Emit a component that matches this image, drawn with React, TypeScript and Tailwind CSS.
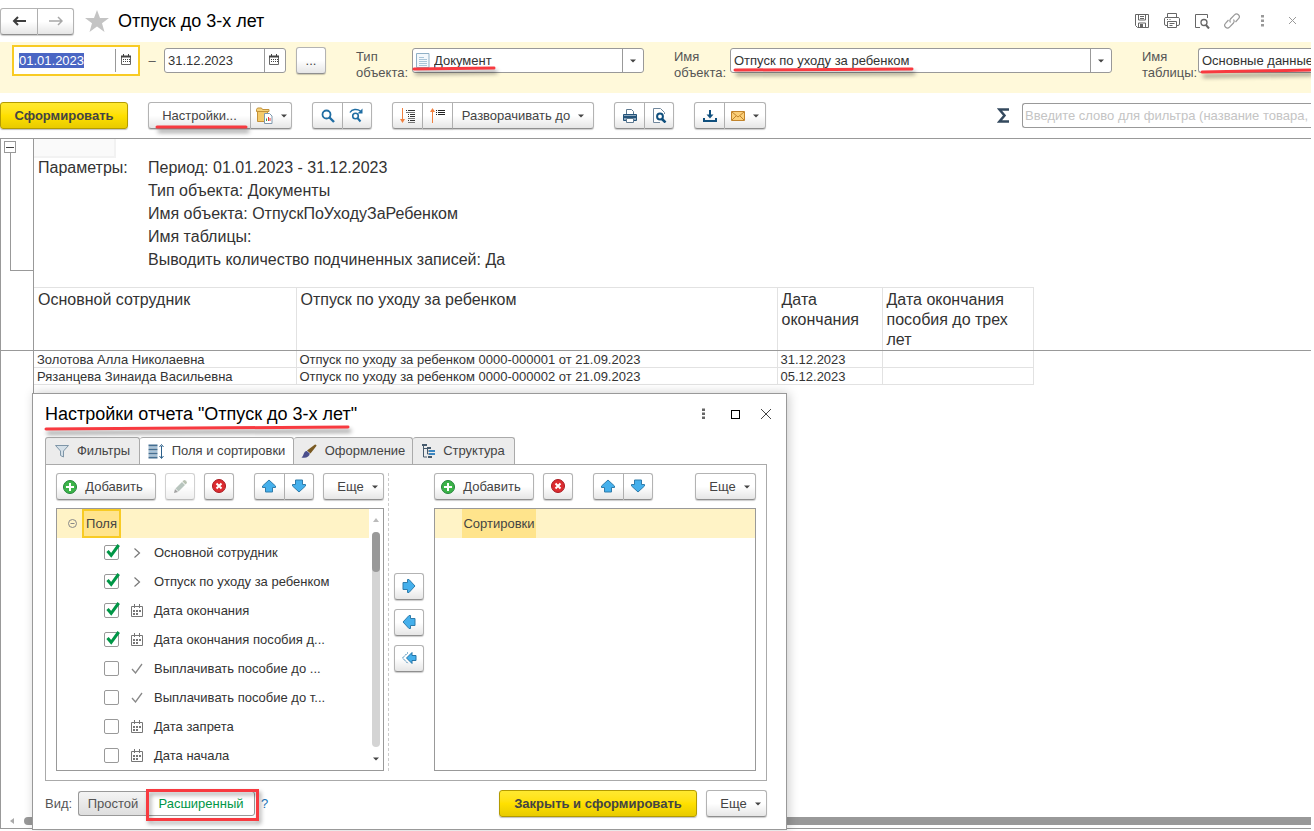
import { useEffect, useRef, useState } from "react";
import type { ReactNode } from "react";
import clsx from "clsx";

const BTN = "flex h-[27px] items-center justify-center border border-[#b3b3b3] border-b-[#8f8f8f] bg-linear-to-b from-white from-50% to-[#e6e6e6] text-[#444] shadow-[0_1px_1px_rgba(0,0,0,0.2)]";
const YELLOW = "flex h-[27px] items-center justify-center rounded-[3px] border border-[#b39b00] bg-linear-to-b from-[#ffe92f] via-[#ffe000] to-[#e8cb00] font-bold text-[#444] shadow-[0_1px_1px_rgba(0,0,0,0.25)]";

type BtnProps = { children: ReactNode; className?: string; label?: string; disabled?: boolean; pos?: "one" | "first" | "mid" | "last" };

function Btn({ children, className, label, disabled, pos = "one" }: BtnProps) {
  return (
    <button
      type="button"
      aria-label={label}
      disabled={disabled}
      className={clsx(
        BTN,
        pos === "one" && "rounded-[3px]",
        pos === "first" && "rounded-l-[3px]",
        pos === "mid" && "border-l-0",
        pos === "last" && "rounded-r-[3px] border-l-0",
        className
      )}
    >
      {children}
    </button>
  );
}

function Caret({ className }: { className?: string }) {
  return (
    <svg className={clsx("shrink-0", className)} width="6" height="4" viewBox="0 0 6 4">
      <path d="M0 0.5h6L3 3.5z" fill="#444" />
    </svg>
  );
}

// hand-drawn red underline with a soft shadow
function Mark({ w, y1, y2, className }: { w: number; y1: number; y2: number; className: string }) {
  return (
    <svg
      className={clsx("pointer-events-none absolute z-10 overflow-visible drop-shadow-[2px_4px_2px_rgba(0,0,0,0.45)]", className)}
      width={w}
      height="4"
    >
      <line x1="1" y1={y1} x2={w - 1} y2={y2} stroke="#f83a40" strokeWidth="3" strokeLinecap="round" />
    </svg>
  );
}

function CalendarSmall() {
  return (
    <svg width="10" height="11" viewBox="0 0 10 11" fill="none" stroke="#444">
      <path d="M0.5 2.5h9v8h-9z" stroke="#666" />
      <path d="M0 2.5h10" strokeWidth="2" />
      <path d="M2.5 0v2M7.5 0v2" />
      <path d="M2 5.5h7M2 7.5h7" strokeDasharray="1 1" />
    </svg>
  );
}

function CalendarField() {
  return (
    <svg width="12" height="13" viewBox="0 0 12 13" fill="none" stroke="#777">
      <path d="M0.5 2.5h11v10h-11z" />
      <path d="M3.5 0v4M8.5 0v4" />
      <path d="M2 7h8M2 10h5" strokeWidth="2" strokeDasharray="2 1" />
    </svg>
  );
}

function PlusIcon() {
  return (
    <svg width="14" height="14" viewBox="0 0 14 14">
      <circle cx="7" cy="7" r="6.5" fill="#3cb449" stroke="#23843a" />
      <path d="M7 3v8M3 7h8" stroke="#fff" strokeWidth="2" />
    </svg>
  );
}

function DeleteIcon() {
  return (
    <svg width="14" height="14" viewBox="0 0 14 14">
      <circle cx="7" cy="7" r="6.5" fill="#dc2c30" stroke="#a81c22" />
      <path d="M4.5 4.5l5 5M9.5 4.5l-5 5" stroke="#fff" strokeWidth="2" />
    </svg>
  );
}

function BlueArrow({ className, double }: { className?: string; double?: boolean }) {
  return (
    <svg className={className} width="16" height="16" viewBox="0 0 16 16">
      {double ? (
        <>
          <path d="M15 5.5v5h-4v3L5.5 8l5.5-5.5v3z" fill="#45b0ec" stroke="#2475a8" />
          <path d="M7 2.5L1.5 8L7 13.5" fill="none" stroke="#2475a8" strokeDasharray="1.5 0.7" />
        </>
      ) : (
        <path d="M8 2L14.5 8v1.5h-3V14h-7V9.5h-3V8z" fill="#45b0ec" stroke="#2f7cab" />
      )}
    </svg>
  );
}

function Lens({ size = 14 }: { size?: number }) {
  return (
    <svg width={size} height={size} viewBox="0 0 14 14" fill="none" stroke="#1f6da3">
      <circle cx="5.5" cy="5.5" r="4" strokeWidth="1.8" />
      <path d="M8.5 8.5l4.5 4.5" strokeWidth="2.4" />
    </svg>
  );
}

function Header() {
  return (
    <header className="flex h-[42px] items-center">
      <div className="flex">
        <Btn pos="first" label="Назад" className="h-6 w-[38px]">
          <svg width="14" height="10" viewBox="0 0 14 10" fill="none" stroke="#3d3d3d" strokeWidth="2">
            <path d="M14 5H2M6 1L2 5l4 4" />
          </svg>
        </Btn>
        <Btn pos="last" label="Вперед" className="h-6 w-9">
          <svg width="14" height="10" viewBox="0 0 14 10" fill="none" stroke="#a8a8a8" strokeWidth="1.5">
            <path d="M0 5h13M9 1l4 4-4 4" />
          </svg>
        </Btn>
      </div>
      <button type="button" aria-label="В избранное" className="ml-[11px]">
        <svg width="24" height="22" viewBox="0 0 24 22">
          <path d="M12 0l3 8h9l-7 5.2L19.5 22 12 16.6 4.5 22 7 13.2 0 8h9z" fill="#c4c4c4" />
        </svg>
      </button>
      <h1 className="ml-[9px] text-lg text-black">Отпуск до 3-х лет</h1>
      <div className="ml-auto flex items-center gap-[14px] pr-[11px]">
        <button type="button" aria-label="Сохранить">
          <svg width="16" height="16" viewBox="0 0 16 16" fill="none" stroke="#666">
            <path d="M1.5 1.5h13v13h-11l-2-2z" />
            <path d="M4.5 2v5h7V2M6 3.5h4M6 5.5h4M4.5 14v-4h7v4" />
            <path d="M6 11h3v3H6z" fill="#666" stroke="none" />
          </svg>
        </button>
        <button type="button" aria-label="Печать">
          <svg width="16" height="16" viewBox="0 0 16 16" fill="none" stroke="#666">
            <path d="M3.5 4V0.5h9V4M3.5 12.5H2a1.5 1.5 0 0 1-1.5-1.5V5.5A1.5 1.5 0 0 1 2 4.5h12a1.5 1.5 0 0 1 1.5 1v5.5a1.5 1.5 0 0 1-1.5 1.5h-1.5" />
            <path d="M3.5 8.5h9v6h-9zM5.5 10.5h5M5.5 12.5h3M3 6.5h1M5.5 6.5h1" />
          </svg>
        </button>
        <button type="button" aria-label="Просмотр">
          <svg width="16" height="16" viewBox="0 0 16 16" fill="none" stroke="#666">
            <path d="M6 14.5H1.5v-13h12V5" />
            <circle cx="10" cy="9.5" r="3" strokeWidth="1.3" />
            <path d="M12 12l3 3.5" strokeWidth="2" />
          </svg>
        </button>
        <button type="button" aria-label="Ссылка">
          <svg width="16" height="16" viewBox="0 0 16 16" fill="none" stroke="#999" strokeWidth="1.2">
            <path d="M6.5 9.5a3 3 0 0 1 0-3.5l4-4.2a2.6 2.6 0 0 1 4 3.8L11.5 9" />
            <path d="M9.5 6.5a3 3 0 0 1 0 3.5l-4 4.2a2.6 2.6 0 0 1-4-3.8L4.5 7" />
          </svg>
        </button>
        <button type="button" aria-label="Меню">
          <svg width="16" height="16" viewBox="0 0 16 16" fill="#999">
            <path d="M7 2h3v2.5H7zM7 6.5h3V9H7zM7 11h3v2.5H7z" />
          </svg>
        </button>
        <button type="button" aria-label="Закрыть">
          <svg width="16" height="16" viewBox="0 0 16 16" stroke="#999">
            <path d="M5 4l7 7M12 4l-7 7" />
          </svg>
        </button>
      </div>
    </header>
  );
}

type ComboProps = { id: string; label: [string, string]; value: string; className: string; icon?: ReactNode; mark: ReactNode; cut?: boolean };

function Combo({ id, label, value, className, icon, mark, cut }: ComboProps) {
  return (
    <div className={clsx("flex", cut && "shrink-0", className)}>
      <label htmlFor={id} className="w-14 shrink-0 pt-[1px] leading-4 text-[#555]">
        {label[0]}
        <br />
        {label[1]}
      </label>
      <div className={clsx("relative flex h-[25px] min-w-0 flex-1 items-center border border-[#999] bg-white", cut ? "rounded-l-[3px] border-r-0" : "rounded-[3px]")}>
        {icon}
        <select id={id} className="h-full min-w-0 flex-1 appearance-none bg-transparent pl-[3px] text-[#333] outline-none">
          <option>{value}</option>
        </select>
        {!cut && (
          <span className="pointer-events-none flex h-full w-[21px] items-center justify-center border-l border-[#999]">
            <Caret />
          </span>
        )}
        {mark}
      </div>
    </div>
  );
}

function FilterBar() {
  const from = useRef<HTMLInputElement>(null);

  useEffect(() => {
    from.current?.focus();
    from.current?.select();
  }, []);

  return (
    <section className="flex h-[51px] items-start bg-[#fff9da] pt-[3px] pl-3">
      <div className="flex h-[31px] w-32 shrink-0 items-center border-2 border-[#f8cb24] bg-white">
        <input
          ref={from}
          aria-label="Начало периода"
          defaultValue="01.01.2023"
          className="h-[23px] w-[101px] pl-[5px] text-[#333] outline-none selection:bg-[#4a66c4] selection:text-white"
        />
        <button type="button" aria-label="Выбрать начало" className="flex h-[23px] flex-1 items-center justify-center border-l border-[#999] pr-[2px] pb-[2px]">
          <CalendarSmall />
        </button>
      </div>
      <span className="w-6 shrink-0 pt-[6px] text-center text-[#555]">–</span>
      <div className="mt-[3px] flex h-[25px] w-[122px] shrink-0 items-center rounded-[3px] border border-[#999] bg-white">
        <input aria-label="Конец периода" defaultValue="31.12.2023" className="w-[99px] pl-[3px] text-[#333] outline-none" />
        <button type="button" aria-label="Выбрать конец" className="flex h-full flex-1 items-center justify-center border-l border-[#999] pr-[2px] pb-[2px]">
          <CalendarSmall />
        </button>
      </div>
      <Btn className="mt-[2px] ml-[10px] w-[30px] shrink-0" label="Выбрать период">...</Btn>
      <div className="mt-[3px] ml-[30px] flex min-w-0 flex-1 gap-[30px]">
        <Combo
          id="obj-type"
          label={["Тип", "объекта:"]}
          value="Документ"
          className="w-72 shrink-0"
          icon={
            <svg className="ml-[3px] shrink-0" width="15" height="15" viewBox="0 0 15 15">
              <path d="M0.5 0.5h12.5v14h-12.5z" fill="#f3f8fc" stroke="#8fb0c6" />
              <path d="M3 4.5h5M3 6.5h8M3 8.5h8M3 10.5h8M3 12.5h8" stroke="#a9c5d8" />
            </svg>
          }
          mark={<Mark w={82} y1={2} y2={1} className="top-[18px] left-0" />}
        />
        <Combo
          id="obj-name"
          label={["Имя", "объекта:"]}
          value="Отпуск по уходу за ребенком"
          className="min-w-0 flex-1"
          mark={<Mark w={179} y1={2} y2={1} className="top-[19px] left-[3px]" />}
        />
        <Combo
          id="table-name"
          label={["Имя", "таблицы:"]}
          value="Основные данные"
          className="w-[169px]"
          cut
          mark={<Mark w={110} y1={4} y2={2} className="top-[19px] left-[2px]" />}
        />
      </div>
    </section>
  );
}

function Toolbar() {
  return (
    <div className="flex h-[45px] items-start pt-[9px]">
      <button type="button" className={clsx(YELLOW, "w-32")}>Сформировать</button>
      <div className="relative ml-5 flex">
        <Btn pos="first" className="w-[103px]">Настройки...</Btn>
        <Btn pos="last" label="Варианты отчета" className="w-[41px] gap-2">
          <svg width="17" height="17" viewBox="0 0 17 17">
            <path d="M0.5 2.5l1-1.5h4l1 1.5h6.5v2H0.5z" fill="#f7d47c" stroke="#c3923a" />
            <path d="M1.5 4.5h10v10h-10z" fill="#f5cb69" stroke="#c3923a" />
            <path d="M8.5 6.5h5l2.5 2.5v7.5H8.5z" fill="#fff" stroke="#7f98ad" />
            <path d="M10.5 14v-2.5" stroke="#2f9e4a" />
            <path d="M12.5 14v-4" stroke="#e03c3c" />
            <path d="M14 14v-3" stroke="#e03c3c" />
          </svg>
          <Caret />
        </Btn>
        <Mark w={91} y1={2} y2={2} className="top-[23px] left-2" />
      </div>
      <div className="ml-5 flex">
        <Btn pos="first" label="Найти" className="w-[31px]"><Lens /></Btn>
        <Btn pos="last" label="Найти далее" className="w-[29px]">
          <svg width="16" height="15" viewBox="0 0 16 15" fill="none" stroke="#1f6da3">
            <circle cx="6.5" cy="8" r="2.8" strokeWidth="1.6" />
            <path d="M8.5 10l3 3.5" strokeWidth="2" />
            <path d="M1 4.5C3 1 8 0.5 11.5 3" strokeWidth="1.5" />
            <path d="M13.5 0.5v5h-5z" fill="#1f6da3" stroke="none" />
          </svg>
        </Btn>
      </div>
      <div className="ml-5 flex">
        <Btn pos="first" label="Развернуть группы" className="w-[31px]">
          <svg width="17" height="16" viewBox="0 0 17 16" fill="none">
            <path d="M3.5 0v13" stroke="#f08040" />
            <path d="M1 11h5L3.5 15z" fill="#f08040" />
            <path d="M7 2.5h9M9 6.5h7M9 8.5h7M9 12.5h7" stroke="#333" strokeDasharray="1 1 8" />
            <path d="M7 4.5h9M9 10.5h7M9 14.5h7" stroke="#777" />
          </svg>
        </Btn>
        <Btn pos="mid" label="Свернуть группы" className="w-[30px]">
          <svg width="17" height="16" viewBox="0 0 17 16" fill="none">
            <path d="M3.5 3v12" stroke="#f08040" />
            <path d="M1 4h5L3.5 0z" fill="#f08040" />
            <path d="M7 2.5h9M7 4.5h9M7 6.5h9" stroke="#222" strokeDasharray="1 1 8" />
          </svg>
        </Btn>
        <Btn pos="last" className="w-[141px] gap-2">
          Разворачивать до
          <Caret />
        </Btn>
      </div>
      <div className="ml-5 flex">
        <Btn pos="first" label="Печать отчета" className="w-[31px]">
          <svg width="14" height="14" viewBox="0 0 14 14">
            <path d="M3.5 0.5h5l2 2V6h-7z" fill="#fff" stroke="#5c7890" />
            <path d="M0.5 5.5h13v6h-13z" fill="#8fa9bf" stroke="#24547a" />
            <path d="M0 8h14" stroke="#24547a" strokeWidth="2" />
            <path d="M3.5 9.5h7v4h-7z" fill="#fff" stroke="#5c7890" />
          </svg>
        </Btn>
        <Btn pos="last" label="Просмотр перед печатью" className="w-[29px]">
          <svg width="15" height="15" viewBox="0 0 15 15" fill="none">
            <path d="M8 14.5H1.5v-14h7l4 4V6" stroke="#70879c" fill="#fff" />
            <circle cx="8" cy="8.5" r="2.9" stroke="#0f4f7d" strokeWidth="2" fill="#fff" />
            <path d="M10 11l3.5 3.5" stroke="#0f4f7d" strokeWidth="2.5" />
          </svg>
        </Btn>
      </div>
      <div className="ml-5 flex">
        <Btn pos="first" label="Сохранить отчет" className="w-[31px]">
          <svg width="14" height="12" viewBox="0 0 14 12" fill="none" stroke="#0f4f7d" strokeWidth="2">
            <path d="M7 0v6M1 8v3h12V8" />
            <path d="M3.5 4.5h7L7 8.5z" fill="#0f4f7d" stroke="none" />
          </svg>
        </Btn>
        <Btn pos="last" label="Отправить" className="w-[41px] gap-2">
          <svg width="14" height="10" viewBox="0 0 14 10" fill="none" stroke="#c1842c">
            <path d="M0.5 0.5h13v9h-13z" fill="#fbcf78" />
            <path d="M1 1l6 5 6-5M1 9l4-4M13 9L9 5" />
          </svg>
          <Caret />
        </Btn>
      </div>
      <button type="button" aria-label="Сумма" className="ml-auto flex h-[27px] w-[14px] items-center">
        <svg width="13" height="15" viewBox="0 0 13 15" fill="none" stroke="#34495e" strokeWidth="2.5">
          <path d="M12 1.5H2.5L7.5 7.5L2.5 13.5H12" />
        </svg>
      </button>
      <input
        aria-label="Фильтр"
        placeholder="Введите слово для фильтра (название товара, покупателя и пр.)"
        className="mt-px ml-[11px] h-[25px] w-[289px] rounded-l-[3px] border border-r-0 border-[#999] bg-white pl-[2px] outline-none placeholder:text-[#c4c4c4]"
      />
    </div>
  );
}

const PARAMS = [
  "Период: 01.01.2023 - 31.12.2023",
  "Тип объекта: Документы",
  "Имя объекта: ОтпускПоУходуЗаРебенком",
  "Имя таблицы:",
  "Выводить количество подчиненных записей: Да",
];

const ROWS = [
  ["Золотова Алла Николаевна", "Отпуск по уходу за ребенком 0000-000001 от 21.09.2023", "31.12.2023", ""],
  ["Рязанцева Зинаида Васильевна", "Отпуск по уходу за ребенком 0000-000002 от 21.09.2023", "05.12.2023", ""],
];

function Report() {
  return (
    <main className="flex flex-1 flex-col border-t border-b border-l border-[#999]">
      <div className="flex flex-1">
        <div className="flex w-8 shrink-0 flex-col">
          <div className="flex h-[212px] flex-col items-start border-b border-[#999] pl-[3px]">
            <button type="button" aria-label="Свернуть" className="mt-[2px] flex size-3 items-center justify-center border border-[#999]">
              <span className="h-px w-2 bg-[#444]" />
            </button>
            <span className="ml-[6px] h-[118px] w-[23px] border-b border-l border-[#999]" />
          </div>
        </div>
        <div className="min-w-0 flex-1 border-l border-[#999] text-[#333]">
          <div className="h-[19px] w-[82px] border-r-2 border-b-2 border-[#f2f2f2] bg-[#fafafa]" />
          <dl className="-mt-[2px] flex h-[131px] pl-1 text-base leading-[23px]">
            <dt className="w-[110px]">Параметры:</dt>
            <dd>
              {PARAMS.map((p) => (
                <p key={p}>{p}</p>
              ))}
            </dd>
          </dl>
          <div className="relative">
            <table className="w-[999px] table-fixed border-collapse text-left">
              <colgroup>
                <col className="w-[262px]" />
                <col className="w-[481px]" />
                <col className="w-[105px]" />
                <col className="w-[151px]" />
              </colgroup>
              <thead>
                <tr className="h-[63px] align-top text-base leading-5">
                  {["Основной сотрудник", "Отпуск по уходу за ребенком", "Дата окончания", "Дата окончания пособия до трех лет"].map((h, i) => (
                    <th key={h} className={clsx("border-t border-r border-[#e2e2e2] pt-[2px] pl-1 font-normal", i === 3 && "pr-4")}>{h}</th>
                  ))}
                </tr>
              </thead>
              <tbody>
                {ROWS.map((r) => (
                  <tr key={r[0]} className="h-[17px] leading-[14px]">
                    {r.map((c, i) => (
                      <td key={i} className="border-r border-b border-[#e2e2e2] pt-[2px] pl-[3px]">{c}</td>
                    ))}
                  </tr>
                ))}
              </tbody>
            </table>
            <div className="absolute top-[63px] right-0 left-0 h-px bg-[#999]" />
          </div>
        </div>
      </div>
      <div className="mb-[3px] flex h-2 items-center">
        <svg className="ml-[9px]" width="4" height="6" viewBox="0 0 4 6"><path d="M4 0v6L0 3z" fill="#aaa" /></svg>
        <div className="ml-[10px] h-2 flex-1 rounded-l-full bg-[#999]" />
      </div>
    </main>
  );
}

type Field = { name: string; kind: "ref" | "date" | "bool"; on: boolean };

const FIELDS: Field[] = [
  { name: "Основной сотрудник", kind: "ref", on: true },
  { name: "Отпуск по уходу за ребенком", kind: "ref", on: true },
  { name: "Дата окончания", kind: "date", on: true },
  { name: "Дата окончания пособия д...", kind: "date", on: true },
  { name: "Выплачивать пособие до ...", kind: "bool", on: false },
  { name: "Выплачивать пособие до т...", kind: "bool", on: false },
  { name: "Дата запрета", kind: "date", on: false },
  { name: "Дата начала", kind: "date", on: false },
];

function FieldRow({ field }: { field: Field }) {
  const [on, setOn] = useState(field.on);
  return (
    <li>
      <label className="flex h-[29px] items-center pl-[47px]">
        <span className="relative flex size-[15px]">
          <input
            type="checkbox"
            checked={on}
            onChange={(e) => setOn(e.target.checked)}
            className="size-[15px] appearance-none rounded-[2px] border border-[#999] bg-white"
          />
          {on && (
            <svg className="pointer-events-none absolute -top-px left-[2px]" width="14" height="14" viewBox="0 0 14 14">
              <path d="M1.5 7l3.7 4.3L12.7 1" fill="none" stroke="#009646" strokeWidth="3" />
            </svg>
          )}
        </span>
        <span className="ml-3 flex w-3 justify-center">
          {field.kind === "ref" && (
            <svg width="8" height="10" viewBox="0 0 8 10" fill="none" stroke="#777" strokeWidth="1.2">
              <path d="M1.5 0.5L6.5 5l-5 4.5" />
            </svg>
          )}
          {field.kind === "date" && <CalendarField />}
          {field.kind === "bool" && (
            <svg width="12" height="11" viewBox="0 0 12 11" fill="none" stroke="#888" strokeWidth="1.3">
              <path d="M1 6l3.5 4L11 1" />
            </svg>
          )}
        </span>
        <span className="ml-[11px] whitespace-nowrap text-[#333]">{field.name}</span>
      </label>
    </li>
  );
}

const TABS = [
  {
    name: "Фильтры",
    width: "w-[95px]",
    icon: (
      <svg width="14" height="13" viewBox="0 0 14 13">
        <path d="M0.5 0.5h13L8.5 6v6l-3-1.5V6z" fill="#d5e0e8" stroke="#7f96a8" />
      </svg>
    ),
  },
  {
    name: "Поля и сортировки",
    width: "w-[154px]",
    icon: (
      <svg width="16" height="15" viewBox="0 0 16 15" fill="none" stroke="#2c5f8a">
        <path d="M0.5 1.5h9M0.5 5.5h9M0.5 9.5h9M0.5 13.5h9" stroke="#456f92" strokeWidth="2" />
        <path d="M0.5 3.5h9M0.5 7.5h9M0.5 11.5h9" stroke="#a5c4dc" />
        <path d="M13.5 2v12" />
        <path d="M11.5 3l2-2.5 2 2.5M11.5 12l2 2.5 2-2.5" />
      </svg>
    ),
  },
  {
    name: "Оформление",
    width: "w-[119px]",
    icon: (
      <svg width="16" height="15" viewBox="0 0 16 15">
        <path d="M14 0.5c1.5 0 2 1 1 2L9.500 9.500 6 6.500z" fill="#7a5a22" />
        <path d="M5.800 7l3 2.600C8.500 13 5 14.500 0.500 13.500 3 12 2 7.500 5.800 7z" fill="#4b4f8c" />
      </svg>
    ),
  },
  {
    name: "Структура",
    width: "w-[102px]",
    icon: (
      <svg width="13" height="14" viewBox="0 0 13 14" fill="none">
        <path d="M0 1h5M5 4h4M6 13h4" stroke="#465a6c" strokeWidth="2" />
        <path d="M7 7h6M7 10h6" stroke="#3c86c0" strokeWidth="2" />
        <path d="M1.5 2v11H5M1.5 4.5H5M5.5 5v5M5.5 7H7M5.5 10H7" stroke="#465a6c" />
      </svg>
    ),
  },
];

function More() {
  return (
    <Btn className="w-[61px] gap-2 pl-2">
      Еще
      <Caret />
    </Btn>
  );
}

function AddButton() {
  return (
    <Btn className="w-[100px] gap-2 pr-[6px]">
      <PlusIcon />
      Добавить
    </Btn>
  );
}

function UpDown() {
  return (
    <div className="ml-5 flex">
      <Btn pos="first" label="Вверх" className="w-[31px] pr-px pb-px"><BlueArrow /></Btn>
      <Btn pos="last" label="Вниз" className="w-[29px] pr-px pb-px"><BlueArrow className="rotate-180" /></Btn>
    </div>
  );
}

function SettingsDialog() {
  const [tab, setTab] = useState("Поля и сортировки");
  const [mode, setMode] = useState("Расширенный");

  return (
    <div
      role="dialog"
      aria-labelledby="dlg-title"
      className="absolute top-[393px] left-8 z-20 w-[755px] border border-[#999] bg-white px-3 pb-3 shadow-[2px_0_10px_rgba(0,0,0,0.2)]"
    >
      <div className="relative flex h-[43px] items-center pb-[3px]">
        <h2 id="dlg-title" className="text-lg text-black">Настройки отчета "Отпуск до 3-х лет"</h2>
        <Mark w={304} y1={3} y2={1} className="top-8 left-0" />
        <div className="ml-auto flex items-center gap-[15px]">
          <button type="button" aria-label="Меню окна">
            <svg width="16" height="16" viewBox="0 0 16 16" fill="#666">
              <path d="M6 2.5h3V5H6zM6 6.5h3V9H6zM6 10.5h3V13H6z" />
            </svg>
          </button>
          <button type="button" aria-label="Развернуть" className="flex size-4 items-center justify-center">
            <span className="size-[9px] border border-black" />
          </button>
          <button type="button" aria-label="Закрыть окно" className="flex size-4 items-center justify-center">
            <svg width="12" height="12" viewBox="0 0 12 12" stroke="#444">
              <path d="M1 1l10 10M11 1L1 11" />
            </svg>
          </button>
        </div>
      </div>

      <div role="tablist" className="flex">
        {TABS.map((t, i) => (
          <button
            key={t.name}
            type="button"
            role="tab"
            aria-selected={tab === t.name}
            onClick={() => setTab(t.name)}
            className={clsx(
              "flex h-[27px] items-center justify-center gap-2 rounded-t-[3px] border-t border-r border-[#aaa] whitespace-nowrap text-[#444]",
              t.width,
              i === 0 && "border-l",
              tab === t.name ? "relative z-10 -mb-px h-7 bg-white" : "bg-[#ececec]"
            )}
          >
            {t.icon}
            {t.name}
          </button>
        ))}
      </div>

      <div className="mr-[7px] flex border border-[#aaa] px-[10px] pt-2 pb-[9px]">
        <div className="w-[328px]">
          <div className="flex">
            <AddButton />
            <Btn className="ml-[9px] w-[30px] opacity-60" label="Изменить" disabled>
              <svg width="14" height="14" viewBox="0 0 14 14">
                <path d="M1 13l1-4 3 3z" fill="#666" />
                <path d="M2.5 8.5L9 2l3 3-6.5 6.5z" fill="#8a9f93" />
                <path d="M9.5 1.5l1-1q1-0.8 2 0l1 1q0.8 1 0 2l-1 1z" fill="#8a9a80" />
              </svg>
            </Btn>
            <Btn className="ml-[9px] w-[30px] pb-px" label="Удалить"><DeleteIcon /></Btn>
            <UpDown />
            <div className="ml-auto"><More /></div>
          </div>
          <div className="mt-2 flex h-[263px] border border-[#999]">
            <div className="min-w-0 flex-1">
              <div className="flex h-[29px] bg-[#fff3c6]">
                <button type="button" aria-label="Свернуть поля" className="flex w-[25px] items-center justify-end pr-[5px] pb-px">
                  <svg width="9" height="9" viewBox="0 0 9 9" fill="none" stroke="#888">
                    <circle cx="4.5" cy="4.5" r="4" />
                    <path d="M2.5 4.5h4" />
                  </svg>
                </button>
                <span className="flex w-[39px] items-center justify-center border-2 border-[#f8cb24] bg-[#ffe48c] text-[#444]">Поля</span>
              </div>
              <ul>
                {FIELDS.map((f) => (
                  <FieldRow key={f.name} field={f} />
                ))}
              </ul>
            </div>
            <div className="flex w-[14px] flex-col items-center pt-[9px] pb-[9px]">
              <svg width="6" height="4" viewBox="0 0 6 4"><path d="M0 4h6L3 0z" fill="#bbb" /></svg>
              <div className="mt-[10px] mb-[10px] w-2 flex-1 rounded-full bg-[#d4d4d4]">
                <div className="h-10 rounded-full bg-[#999]" />
              </div>
              <Caret />
            </div>
          </div>
        </div>

        <div className="ml-1 flex w-[46px] flex-col gap-[9px] border-l border-dashed border-[#ccc] pt-[100px] pl-[5px]">
          <Btn className="w-[30px] pb-px" label="Добавить в сортировку"><BlueArrow className="rotate-90" /></Btn>
          <Btn className="w-[30px] pb-px" label="Убрать из сортировки"><BlueArrow className="-rotate-90" /></Btn>
          <Btn className="w-[30px] pb-px" label="Убрать все"><BlueArrow double /></Btn>
        </div>

        <div className="flex flex-1 flex-col">
          <div className="flex">
            <AddButton />
            <Btn className="ml-[9px] w-[30px] pb-px" label="Удалить сортировку"><DeleteIcon /></Btn>
            <UpDown />
            <div className="ml-auto"><More /></div>
          </div>
          <div className="mt-2 flex-1 border border-[#999]">
            <div className="flex h-[29px] bg-[#fff3c6] pl-[27px]">
              <span className="flex w-[74px] items-center justify-center bg-[#ffe48c] text-[#444]">Сортировки</span>
            </div>
          </div>
        </div>
      </div>

      <div className="mt-[9px] mr-[7px] flex items-center">
        <span className="w-[33px] text-[#555]">Вид:</span>
        <div className="relative flex">
          <button
            type="button"
            onClick={() => setMode("Простой")}
            className={clsx("h-[25px] w-[69px] rounded-l-[3px] border border-r-0 border-[#999]", mode === "Простой" ? "bg-white text-[#009646]" : "bg-linear-to-b from-[#f4f4f4] to-[#dedede] text-[#555]")}
          >
            Простой
          </button>
          <button
            type="button"
            onClick={() => setMode("Расширенный")}
            className={clsx("h-[25px] w-[108px] rounded-r-[3px] border border-[#999]", mode === "Расширенный" ? "bg-white text-[#009646]" : "bg-linear-to-b from-[#f4f4f4] to-[#dedede] text-[#555]")}
          >
            Расширенный
          </button>
          <div className="pointer-events-none absolute -top-[2px] -right-1 h-8 w-[113px] border-3 border-[#f83a40] drop-shadow-[2px_3px_2px_rgba(0,0,0,0.35)]" />
        </div>
        <a href="#help" className="ml-[6px] text-[#1a74b8]">?</a>
        <button type="button" className={clsx(YELLOW, "mr-[9px] ml-auto w-[198px]")}>Закрыть и сформировать</button>
        <More />
      </div>
    </div>
  );
}

export default function App() {
  return (
    <div className="bg-white pr-[3px] font-['Liberation_Sans',Arial,sans-serif] text-[13px]">
      <div className="relative flex min-h-screen flex-col overflow-hidden pb-[2px]">
        <Header />
        <FilterBar />
        <Toolbar />
        <Report />
        <SettingsDialog />
      </div>
    </div>
  );
}
